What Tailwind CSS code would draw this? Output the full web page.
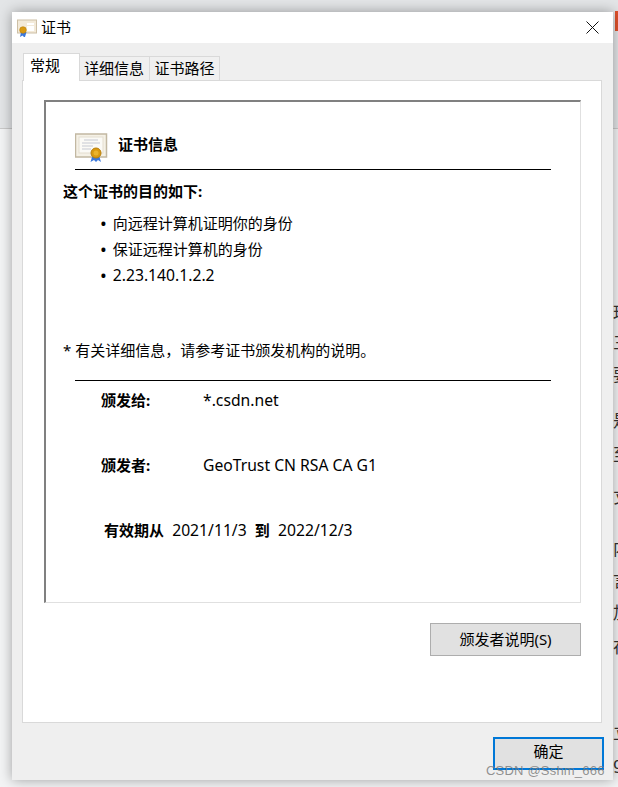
<!DOCTYPE html>
<html lang="zh-CN">
<head>
<meta charset="UTF-8">
<title>证书</title>
<script src="https://cdn.jsdelivr.net/npm/@tailwindcss/browser@4"></script>
</head>
<body class="relative w-[618px] h-[787px] overflow-hidden bg-[#f3f4f5] text-black font-['Noto_Sans','Noto_Sans_CJK_SC',sans-serif]">

    <!-- page behind the dialog -->
    <div class="absolute inset-x-0 top-0 h-[128px] bg-[#e3e5e7]"></div>
    <div class="absolute left-0 top-[128px] w-[12px] h-px bg-[#c9c9c9]"></div>
    <div class="absolute right-0 top-[11px] w-[3px] h-[20px] bg-[#e0512b]"></div>
    <div class="absolute right-0 top-[128px] w-[5px] h-px bg-[#c9c9c9]"></div>
    <div class="absolute left-[613px] top-[300px] w-[5px] h-[480px] overflow-hidden text-[17px] text-[#333]">
        <span class="absolute left-0 top-0">理</span>
        <span class="absolute left-0 top-[30px]">三</span>
        <span class="absolute left-0 top-[62px]">要</span>
        <span class="absolute left-0 top-[108px]">是</span>
        <span class="absolute left-0 top-[142px]">至</span>
        <span class="absolute left-0 top-[184px]">丈</span>
        <span class="absolute left-0 top-[236px]">内</span>
        <span class="absolute left-0 top-[268px]">言</span>
        <span class="absolute left-0 top-[300px]">加</span>
        <span class="absolute left-0 top-[334px]">在</span>
        <span class="absolute left-0 top-[420px]">立</span>
        <span class="absolute left-0 top-[450px]">g</span>
    </div>

    <!-- dialog window -->
    <div class="absolute left-[12px] top-[12px] w-[601px] h-[768px] flex flex-col bg-[#efefef] shadow-[0_0_12px_rgba(0,0,0,0.35)]">
        <div class="h-[31px] shrink-0 bg-white flex items-center pl-[5px] pr-[14px]">
            <svg class="w-[20px] h-[18px] shrink-0" viewBox="0 0 20 18">
                <rect x="0.5" y="1" width="19" height="13" fill="#f3ead9" stroke="#cdbfa5"/>
                <rect x="10" y="4" width="7" height="2" fill="#fff"/>
                <rect x="10" y="7" width="7" height="5" fill="#fff"/>
                <path d="M4 13l-1 5 2.500-1.500L7 18l1 0 1.500-5z" fill="#3b78dc"/>
                <circle cx="6" cy="11" r="3.300" fill="#d99a12" stroke="#b97f0c" stroke-width="0.600"/>
            </svg>
            <span class="ml-[4px] text-[15px] leading-none">证书</span>
            <svg class="ml-auto w-[13px] h-[13px]" viewBox="0 0 13 13">
                <path d="M0.500 0.500L12.500 12.500M12.500 0.500L0.500 12.500" stroke="#111" stroke-width="1" fill="none"/>
            </svg>
        </div>

        <div class="relative mt-[10px] ml-[11px] flex items-end h-[28px] z-10 text-[15px] leading-none">
            <div class="w-[57px] h-[28px] bg-white border border-b-0 border-[#d9d9d9] pt-[4px] pl-[6px]">常规</div>
            <div class="w-[70px] h-[25px] bg-[#f0f0f0] border border-l-0 border-[#d9d9d9] pr-[1px] flex items-center justify-center">详细信息</div>
            <div class="w-[70px] h-[25px] bg-[#f0f0f0] border border-l-0 border-[#d9d9d9] flex items-center justify-center">证书路径</div>
        </div>

        <div class="ml-[10px] mt-[-1px] w-[580px] h-[643px] shrink-0 bg-white border border-[#d9d9d9] pl-[21px] pt-[19px]">
            <div class="w-[537px] h-[503px] border-t-2 border-l-2 border-r border-b border-t-[#808080] border-l-[#808080] border-r-[#e0e0e0] border-b-[#e0e0e0] pt-[31px] text-[15px] leading-[20px]">
                <div class="ml-[29px] w-[476px] h-[37px] flex border-b border-black">
                    <svg class="w-[33px] h-[29px] shrink-0" viewBox="0 0 33 29">
                        <rect x="0.500" y="1" width="31" height="23" fill="#f5f1e6" stroke="#c2b8a2" stroke-width="1.500"/>
                        <rect x="4" y="4" width="24" height="16" fill="#fbfaf6" stroke="#e4decf"/>
                        <path d="M9 7h14M7 10h18M7 13h11M7 16h9" stroke="#c6c9d2" stroke-width="1"/>
                        <path d="M17 24l-1.500 5 3.500-2 2 2 2-2 3 2-1.500-5z" fill="#3b78dc"/>
                        <circle cx="21" cy="20" r="5" fill="#d99a12" stroke="#b97f0c"/>
                        <circle cx="21" cy="20" r="2.500" fill="#eab42e"/>
                    </svg>
                    <span class="ml-[10px] mt-[1px] font-bold">证书信息</span>
                </div>
                <p class="ml-[17px] mt-[11px] font-bold">这个证书的目的如下:</p>
                <ul class="ml-[54px] mt-[12px] flex flex-col gap-[6px]">
                    <li class="flex gap-[6px]"><span class="text-[18px]">•</span><span>向远程计算机证明你的身份</span></li>
                    <li class="flex gap-[6px]"><span class="text-[18px]">•</span><span>保证远程计算机的身份</span></li>
                    <li class="flex gap-[6px]"><span class="text-[18px]">•</span><span class="text-[15.700px]">2.23.140.1.2.2</span></li>
                </ul>
                <p class="ml-[17px] mt-[55px]">* 有关详细信息，请参考证书颁发机构的说明。</p>
                <div class="ml-[29px] w-[476px] h-px mt-[20px] bg-black"></div>
                <div class="ml-[55px] mt-[9px] flex">
                    <span class="w-[102px] font-bold">颁发给:</span><span class="text-[15.700px]">*.csdn.net</span>
                </div>
                <div class="ml-[55px] mt-[45px] flex">
                    <span class="w-[102px] font-bold">颁发者:</span><span class="text-[15.700px]">GeoTrust CN RSA CA G1</span>
                </div>
                <div class="ml-[58px] mt-[45px] flex whitespace-pre">
                    <span class="font-bold">有效期从</span><span class="text-[15.700px]">  2021/11/3  </span><span class="font-bold">到</span><span class="text-[15.700px]">  2022/12/3</span>
                </div>
            </div>
            <div class="mt-[20px] ml-[386px] w-[151px] h-[33px] bg-[#e1e1e1] border border-[#adadad] text-[15px] flex items-center justify-center">颁发者说明(S)</div>
        </div>

        <div class="mt-[14px] ml-[481px] w-[111px] h-[33px] bg-[#e1e1e1] border-2 border-[#0078d7] text-[15px] leading-none pb-[4px] flex items-center justify-center">确定</div>
    </div>

    <!-- watermark -->
    <div class="absolute left-[486px] top-[763px] text-[13px] leading-[16px] tracking-[0.2px] text-[#777]/80 font-['Liberation_Sans',sans-serif]">CSDN @Sshm_666</div>
</body>
</html>
